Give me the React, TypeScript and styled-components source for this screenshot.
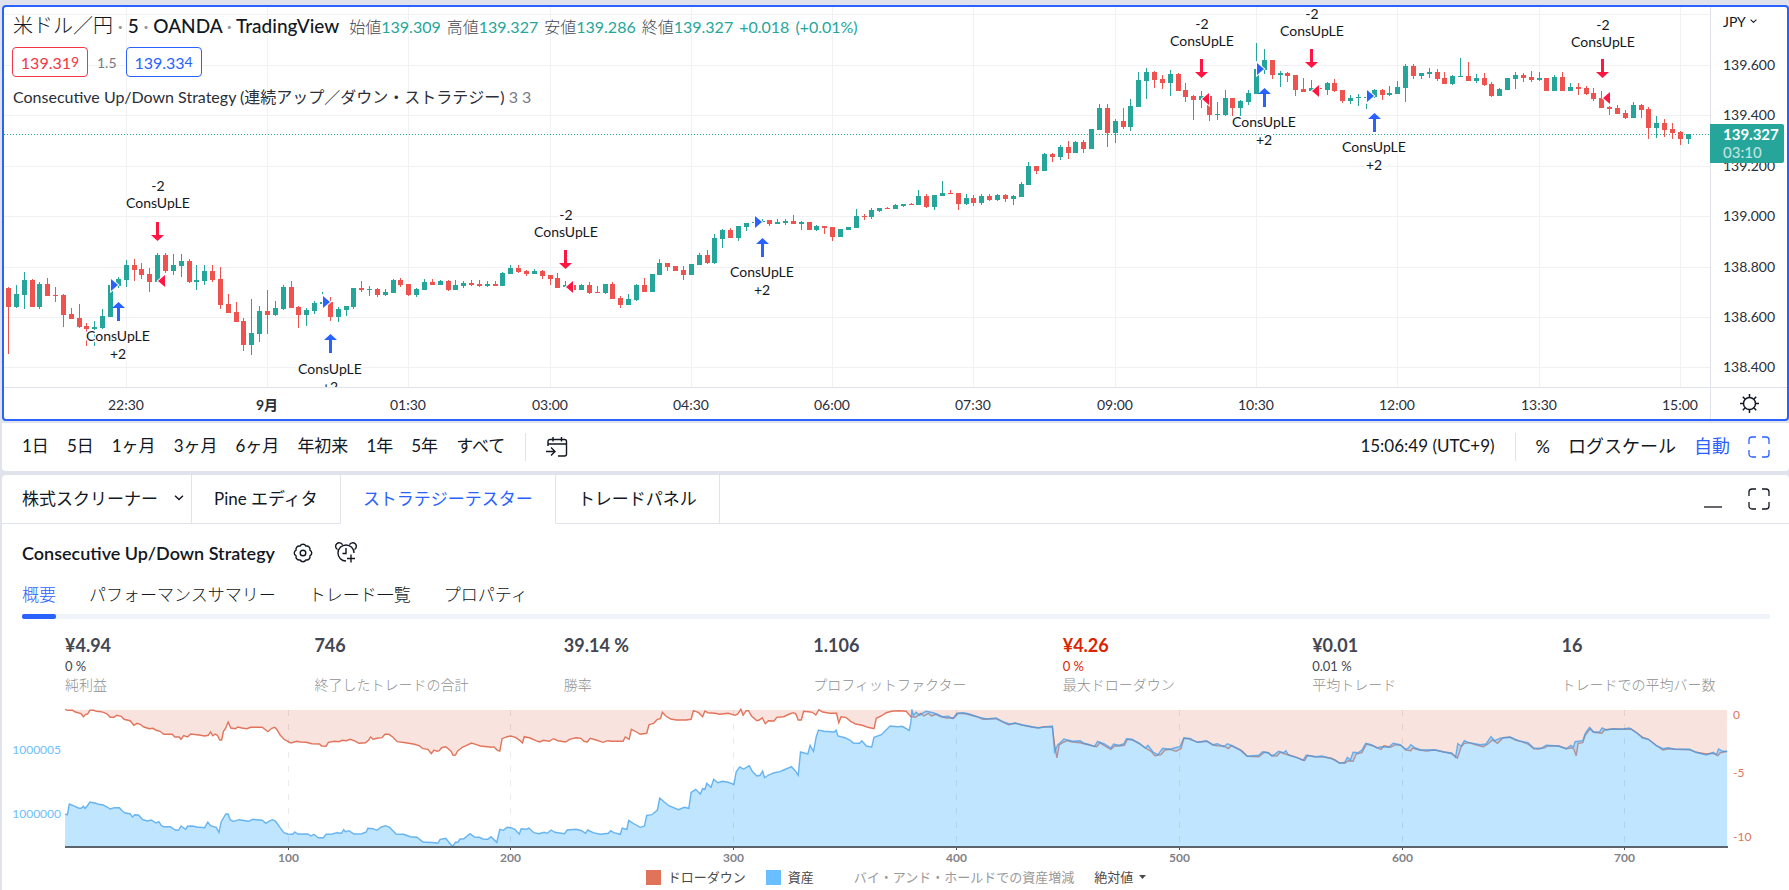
import React from "react";
import styled, { createGlobalStyle } from "styled-components";

const GlobalStyle = createGlobalStyle`
  *, *::before, *::after { box-sizing: border-box; }
  body {
    margin: 0;
    background: #e0e3eb;
    color: #131722;
    font-family: Lato, "Noto Sans CJK JP", sans-serif;
  }
  button, select { font: inherit; color: inherit; background: none; border: 0; padding: 0; margin: 0; cursor: pointer; }
`;

const UP = "#26a69a";
const DOWN = "#ef5350";
const BLUE = "#2962ff";
const SELL = "#ff1744";

const Page = styled.div`
  min-height: 100vh;
  padding: 5px 0 0 2px;
  display: flex;
  flex-direction: column;
`;

/* ---------- price chart ---------- */

const ChartFrame = styled.section`
  position: relative;
  border: 2px solid ${BLUE};
  border-radius: 4px;
  background: #fff;
  display: grid;
  grid-template-columns: minmax(0, 1fr) 77px;
  grid-template-rows: 380px 32px;
  overflow: hidden;
`;

const Pane = styled.div`
  overflow: hidden;
`;

const PlotSvg = styled.svg`
  display: block;
  width: 100%;
  height: 100%;
  font-size: 14px;
`;

const PriceAxis = styled.div`
  border-left: 1px solid #e0e3eb;
`;

const TimeAxis = styled.div`
  border-top: 1px solid #e0e3eb;
`;

const AxisCorner = styled.div`
  border-top: 1px solid #e0e3eb;
  border-left: 1px solid #e0e3eb;
  display: flex;
  align-items: center;
  justify-content: center;
`;

const IconButton = styled.button`
  display: flex;
  color: ${(p) => p.color ?? "#131722"};
`;

const Overlay = styled.div`
  position: absolute;
  top: 4px;
  left: 8px;
  display: flex;
  flex-direction: column;
  align-items: flex-start;
`;

const TitleRow = styled.div`
  display: flex;
  align-items: baseline;
  height: 28px;
  padding-left: 1px;
  line-height: 28px;
  white-space: nowrap;
`;

const SymbolTitle = styled.h1`
  margin: 0;
  font-size: 19px;
  font-weight: 500;
  line-height: 28px;
  i { font-style: normal; color: #9598a1; }
`;

const SymbolName = styled.span`
  font-size: 20px;
  font-weight: 300;
`;

const Quotes = styled.div`
  display: flex;
  align-items: baseline;
  gap: 6px;
  margin-left: 10px;
  font-size: 16px;
  color: ${UP};
`;

const QuoteLabel = styled.span`
  font-weight: 300;
  color: #434651;
`;

const QuoteRow = styled.div`
  display: flex;
  align-items: center;
  gap: 9px;
  margin-top: 8px;
  font-size: 14px;
  color: #787b86;
`;

const PriceButton = styled.button<{ $tone: string }>`
  width: 76px;
  height: 30px;
  border: 1px solid ${(p) => p.$tone};
  border-radius: 4px;
  color: ${(p) => p.$tone};
  background: #fff;
  font-size: 16px;
  sup { font-size: 14px; line-height: 0; vertical-align: 2px; }
`;

const StudyRow = styled.div`
  margin-top: 7px;
  height: 26px;
  line-height: 26px;
  font-size: 16px;
  white-space: nowrap;
  padding-left: 1px;
  color: #2a2e39;
  span { color: #787b86; }
`;

const CurrencyBox = styled.label`
  position: absolute;
  top: 3px;
  right: 30px;
  height: 22px;
  display: flex;
  align-items: center;
  gap: 4px;
  font-size: 14px;
`;

const PlainSelect = styled.select`
  appearance: none;
  outline: none;
`;

const PriceTag = styled.div`
  position: absolute;
  top: 117px;
  right: 3px;
  width: 74px;
  height: 39px;
  padding: 1px 0 0 13px;
  border-radius: 0 2px 2px 0;
  background: ${UP};
  color: #fff;
  font-size: 15px;
  font-weight: 700;
  line-height: 18px;
  div { font-weight: 500; color: #bfe4e0; }
`;

/* Bars: direction, high, body top, body bottom, low; in thirds of a pixel below the run's base. */
const RUN_A = `r351,354,411,552 g345,372,411,414 g306,330,375,417 r327,330,411,411 g336,342,411,417 r323,342,378,378 r351,375,378,396
r372,375,435,471 r414,432,447,447 r402,444,471,474 r459,468,477,528 g453,471,476,528 g417,438,474,477 g345,345,441,441 g321,327,348,354
g270,285,330,351 r266,285,300,333 r279,297,315,327 r294,312,336,366 g249,255,336,336 r249,255,303,309 g252,285,303,315 g252,273,288,321
r267,273,336,339 g285,330,336,360 g285,303,333,345 r285,303,330,336 r291,327,405,417 r372,402,429,429 r396,426,456,456 r444,453,525,543
g387,489,525,555 g408,423,492,516 r360,423,435,492 g393,414,435,438 g345,351,417,420 r333,351,414,414 r408,411,435,474 g414,420,435,468
g393,399,423,432 g366,396,402,402 r381,396,441,453 g411,417,441,456 g408,408,420,438 g354,354,411,417 r333,354,360,366 g348,357,360,378
r354,357,375,381 g357,366,375,377 g327,330,369,369 r324,330,345,351 r342,342,375,378 g354,357,375,381 g327,336,360,360 r327,336,345,345
g330,333,345,345 r330,333,360,363 g330,345,360,360 g333,339,348,354 r330,339,345,348 r330,342,348,351 g333,342,347,351 r333,342,348,348
g306,309,348,348 g285,294,312,312 r285,294,306,309 r300,303,312,318 g297,303,312,312 r300,303,318,327 r315,315,327,345 r309,324,354,354
g333,345,352,354 r345,345,360,360 g342,345,360,360 r336,345,369,372 r348,366,369,369 g342,342,369,372 r336,342,387,387 r378,384,405,414
g372,387,405,405 g342,345,390,393 r324,345,366,366 g312,312,366,366 g267,279,315,315 r279,279,291,303 r288,288,303,303 r288,300,315,330
g282,282,315,315 g249,255,285,285 r240,255,279,282 g192,204,279,282 g177,180,207,234 r174,180,204,204 g168,168,204,213 g159,159,171,183
g156,156,160,160 g147,152,157,160 r150,150,162,168 g147,156,162,162 g147,153,160,165 r135,153,162,162 g153,156,162,180 r156,156,180,180
g165,168,180,183 r168,168,174,192 r171,171,201,213 g177,177,201,201 g171,171,180,180 g117,138,174,174 r132,138,141,150 g114,120,141,147
g114,114,123,126 r111,114,117,117 g102,105,117,117`;

const RUN_B = `g612,612,618,621 r609,612,615,615 g570,588,615,615 r582,588,621,624 g585,585,621,630 g543,579,588,588 r570,579,582,582
r579,579,612,630 g582,594,612,615 r585,594,609,618 g582,588,609,615 r582,588,600,603 g582,585,600,603 r582,585,597,606 g585,588,597,615
g546,552,591,591 g486,498,555,555 r498,498,513,522 g459,462,513,513 r459,462,471,486 g435,441,471,480 r423,441,459,477 g423,426,459,459
r420,426,447,459 g387,387,447,447 g312,324,390,390 r312,324,399,441 g357,363,399,429 r324,363,381,387 g297,318,381,393 g216,240,321,321
g204,216,243,297 r213,216,240,264 r225,237,249,267 g210,222,249,288 r219,222,273,273 r249,270,291,306 r285,288,300,360 g273,288,300,324
r288,288,346,363 g306,342,345,360 g270,294,346,348 r294,294,324,348 g300,303,324,348 g270,279,306,315 g129,207,282,282 g147,180,210,222
r180,180,225,237 g213,219,225,261 r216,219,228,246 r225,225,270,288 r234,267,276,276 g240,264,273,276 r249,264,268,270 g246,249,270,285
r237,249,273,276 r270,270,303,309 g285,294,303,312 g282,291,294,318 g288,291,294,327 g267,270,291,294 r267,270,285,300 g258,279,285,288
g243,261,282,282 g192,198,264,306 r192,198,228,237 g219,219,228,237 g204,216,222,234 r207,216,237,243 r216,234,252,252 g225,228,252,255
g174,228,231,231 r186,228,243,243 g222,234,243,249 r219,234,255,258 r246,252,288,291 g264,267,288,288 g234,234,270,270 g216,225,237,267
r219,225,234,246 r213,231,240,246 g216,234,240,243 r234,234,273,273 g225,231,273,273 r216,231,273,273 g249,261,273,273 r249,261,267,285
r258,264,282,285 r264,279,297,303 r273,294,324,324 r318,321,327,345 r315,324,342,342 r330,339,354,357 g306,315,354,354 r312,315,330,354
r321,327,384,417 g348,369,384,414 r357,369,390,411 r369,387,399,417 r393,396,417,435 g402,402,417,432`;

type Bar = { up: boolean; high: number; top: number; bottom: number; low: number };

const parseRun = (run: string, base: number): Bar[] =>
  run.split(/\s+/).map((item) => {
    const [high, top, bottom, low] = item.slice(1).split(",").map((v) => Math.round(base + Number(v) / 3));
    return { up: item[0] === "g", high, top, bottom: Math.max(bottom, top + 1), low };
  });

const BARS = [...parseRun(RUN_A, 170), ...parseRun(RUN_B, 0)];
const FIRST_X = 8.4;
const BAR_STEP = 7.849;
const barX = (i: number) => Math.round(FIRST_X + i * BAR_STEP - 0.4);

const PRICES = [
  ["", 14], ["139.600", 65], ["139.400", 115], ["139.200", 166], ["139.000", 216],
  ["138.800", 267], ["138.600", 317], ["138.400", 367],
] as const;

const TIMES = ["22:30", "9月", "01:30", "03:00", "04:30", "06:00", "07:30", "09:00", "10:30", "12:00", "13:30", "15:00"];
const timeX = (i: number) => barX(15 + i * 18);

const SELLS = [
  { x: 157, arrow: 222, flag: 281, text: 186 },
  { x: 565, arrow: 250, flag: 287, text: 215 },
  { x: 1201, arrow: 59, flag: 99, text: 24 },
  { x: 1311, arrow: 49, flag: 91, text: 14 },
  { x: 1602, arrow: 59, flag: 98, text: 25 },
];

const BUYS = [
  { x: 118, arrow: 302, flag: 285, text: 336 },
  { x: 330, arrow: 334, flag: 302, text: 369 },
  { x: 762, arrow: 238, flag: 222, text: 272 },
  { x: 1264, arrow: 88, flag: 69, text: 122 },
  { x: 1374, arrow: 113, flag: 96, text: 147 },
];

const MarkText = styled.text`
  fill: #131722;
  stroke: #fff;
  stroke-width: 3px;
  paint-order: stroke;
  text-anchor: middle;
`;

const AxisText = styled.text<{ $bold?: boolean }>`
  fill: #2a2e39;
  text-anchor: middle;
  font-weight: ${(p) => (p.$bold ? 700 : 400)};
`;

const Candles = () => (
  <g shapeRendering="crispEdges">
    {BARS.map((b, i) => {
      const x = barX(i);
      const fill = b.up ? UP : DOWN;
      return (
        <g key={i} fill={fill}>
          <rect x={x} y={b.high} width={1} height={b.low - b.high} />
          <rect x={x - 2} y={b.top} width={5} height={b.bottom - b.top} />
        </g>
      );
    })}
  </g>
);

const PricePlot = () => (
  <PlotSvg viewBox="4 7 1706 380" preserveAspectRatio="xMaxYMin slice" role="img" aria-label="USD/JPY 5分足">
    <g fill="#f0f1f3" shapeRendering="crispEdges">
      {PRICES.map(([, y]) => <rect key={y} x={4} y={y} width={1706} height={1} />)}
      {TIMES.map((t, i) => <rect key={t} x={timeX(i)} y={7} width={1} height={380} />)}
    </g>
    <line x1={4} x2={1710} y1={134.5} y2={134.5} stroke={UP} strokeDasharray="1 2" shapeRendering="crispEdges" />
    <Candles />
    {SELLS.map((s) => (
      <g key={s.x}>
        <path d={`M${s.x + 1} ${s.flag}l7 -6v12z`} fill={SELL} stroke="#fff" strokeWidth={2} paintOrder="stroke" />
        <path d={`M${s.x - 1} ${s.arrow}h3v13h5l-6.5 6l-6.5 -6h5z`} fill={SELL} />
        <MarkText x={s.x + 1} y={s.text + 5}>-2</MarkText>
        <MarkText x={s.x + 1} y={s.text + 22}>ConsUpLE</MarkText>
      </g>
    ))}
    {BUYS.map((b) => (
      <g key={b.x}>
        <path d={`M${b.x} ${b.flag}l-7 -6v12z`} fill={BLUE} stroke="#fff" strokeWidth={2} paintOrder="stroke" />
        <path d={`M${b.x - 1} ${b.arrow + 19}h3v-13h5l-6.5 -6l-6.5 6h5z`} fill={BLUE} />
        <MarkText x={b.x} y={b.text + 5}>ConsUpLE</MarkText>
        <MarkText x={b.x} y={b.text + 23}>+2</MarkText>
      </g>
    ))}
  </PlotSvg>
);

/* ---------- icons ---------- */

const Chevron = ({ size = 7 }: { size?: number }) => (
  <svg width={size} height={size / 2 + 1} viewBox="0 0 8 5" fill="none" stroke="currentColor" strokeWidth="1.2">
    <path d="M.7 .7 4 3.8 7.3 .7" />
  </svg>
);

const SunIcon = () => (
  <svg width="21" height="21" viewBox="0 0 21 21" fill="none" stroke="currentColor" strokeWidth="1.5">
    <circle cx="10.5" cy="10.5" r="6" />
    <path d="M10.5 1v3.5M10.5 16.5V20M1 10.5h3.5M16.5 10.5H20M3.8 3.8l2.4 2.4M14.8 14.8l2.4 2.4M3.8 17.2l2.4-2.4M14.8 6.2l2.4-2.4" />
  </svg>
);

const CornersIcon = () => (
  <svg width="22" height="22" viewBox="0 0 22 22" fill="none" stroke="currentColor" strokeWidth="1.3">
    <path d="M1 8V4a3 3 0 0 1 3-3h4M14 1h4a3 3 0 0 1 3 3v4M21 14v4a3 3 0 0 1-3 3h-4M8 21H4a3 3 0 0 1-3-3v-4" />
  </svg>
);

const GoToDateIcon = () => (
  <svg width="22" height="22" viewBox="0 0 22 22" fill="none" stroke="currentColor" strokeWidth="1.4">
    <path d="M2 10V5.500a2 2 0 0 1 2-2h14.500a2 2 0 0 1 2 2V18a2 2 0 0 1-2 2h-6.500M2 8h18.500M7 1v4.500M15.500 1v4.500M0 15.500h8.500M5 11.500l4 4-4 4" />
  </svg>
);

const GearIcon = () => (
  <svg width="20" height="20" viewBox="0 0 20 20" fill="none" stroke="currentColor" strokeWidth="1.4" strokeLinejoin="round">
    <path d="M16.900 12.900A3.200 3.200 0 0 1 12.900 16.900A3.200 3.200 0 0 1 7.100 16.900A3.200 3.200 0 0 1 3.100 12.900A3.200 3.200 0 0 1 3.100 7.100A3.200 3.200 0 0 1 7.100 3.100A3.200 3.200 0 0 1 12.900 3.100A3.200 3.200 0 0 1 16.900 7.100A3.200 3.200 0 0 1 16.900 12.900z" />
    <circle cx="10" cy="10" r="2.800" />
  </svg>
);

const AlarmAddIcon = () => (
  <svg width="22" height="22" viewBox="0 0 22 22" fill="none" stroke="currentColor" strokeWidth="1.4">
    <path d="M11 19a8 8 0 1 1 8-8M2.500 7.500A3.600 3.600 0 1 1 7.500 2.800M14.500 2.800A3.600 3.600 0 1 1 19.500 7.500M11 6v5.500H7.500M16 12.500v8M12 16.500h8" />
  </svg>
);

/* ---------- range toolbar ---------- */

const RangeBar = styled.nav`
  margin-top: 2px;
  height: 48px;
  padding: 0 19px 0 20px;
  border-radius: 0 0 4px 4px;
  background: #fff;
  display: flex;
  align-items: center;
  font-size: 17px;
  line-height: 24px;
`;

const Ranges = styled.div`
  display: flex;
  gap: 18px;
  padding-bottom: 2px;
`;

const Divider = styled.span`
  width: 1px;
  height: 28px;
  margin: 0 20px;
  background: #e0e3eb;
`;

const Right = styled.div`
  margin-left: auto;
  display: flex;
  align-items: center;
`;

const Clock = styled.button`
  padding-bottom: 2px;
`;

const ScaleOptions = styled.div`
  display: flex;
  align-items: center;
  gap: 18px;
  font-size: 18px;
`;

const ScaleButton = styled.button<{ $active?: boolean }>`
  padding-bottom: 2px;
  color: ${(p) => (p.$active ? BLUE : "#131722")};
`;

/* ---------- tester panel ---------- */

const Panel = styled.section`
  margin-top: 4px;
  flex: 1;
  border-radius: 4px 4px 0 0;
  background: #fff;
`;

const TabStrip = styled.div`
  height: 49px;
  display: flex;
  font-size: 17px;
`;

const PanelTab = styled.button<{ $active?: boolean; $menu?: boolean }>`
  padding: ${(p) => (p.$menu ? "0 7px 3px 20px" : "0 22px 3px")};
  display: flex;
  align-items: center;
  gap: 16px;
  white-space: nowrap;
  color: ${(p) => (p.$active ? BLUE : "#131722")};
  border-right: 1px solid #e0e3eb;
  border-bottom: 1px solid ${(p) => (p.$active ? "#fff" : "#e0e3eb")};
`;

const StripEnd = styled.div`
  flex: 1;
  padding-right: 19px;
  border-bottom: 1px solid #e0e3eb;
  display: flex;
  align-items: center;
  justify-content: flex-end;
  gap: 26px;
`;

const Content = styled.div`
  padding: 15px 19px 0 20px;
`;

const StrategyRow = styled.div`
  height: 28px;
  display: flex;
  align-items: center;
  gap: 18px;
`;

const StrategyActions = styled.div`
  display: flex;
  align-items: center;
  gap: 22px;
`;

const StrategyName = styled.h2`
  margin: 0;
  font-size: 18px;
  font-weight: 600;
  line-height: 28px;
`;

const Views = styled.div`
  margin-top: 12px;
  height: 40px;
  display: flex;
  gap: 33px;
  font-size: 17px;
`;

const ViewTab = styled.button<{ $active?: boolean }>`
  position: relative;
  height: 28px;
  font-weight: 300;
  color: ${(p) => (p.$active ? BLUE : "#131722")};
  &::after {
    content: "";
    display: ${(p) => (p.$active ? "block" : "none")};
    position: absolute;
    left: 0;
    right: 0;
    top: 35px;
    height: 5px;
    border-radius: 2px;
    background: ${BLUE};
  }
`;

const Track = styled.div`
  margin-top: -5px;
  height: 5px;
  border-radius: 2px;
  background: #f0f3fa;
`;

const Stats = styled.dl`
  margin: 15px 0 0;
  padding-left: 43px;
  display: grid;
  grid-template-columns: repeat(7, minmax(0, 1fr));
  margin-right: -41px;
`;

const Stat = styled.div<{ $negative?: boolean }>`
  display: grid;
  grid-template-rows: 22px 20px 18px;
  align-items: center;
  color: ${(p) => (p.$negative ? "#db2500" : "#434651")};
  white-space: nowrap;
  dt { grid-row: 3; font-size: 14px; font-weight: 300; line-height: 18px; color: #8f8f8f; }
  dd { margin: 0; }
`;

const StatValue = styled.dd`
  grid-row: 1;
  font-size: 18px;
  font-weight: 700;
`;

const StatShare = styled.dd`
  grid-row: 2;
  font-size: 13px;
`;

const STATS = [
  { value: "¥4.94", share: "0 %", label: "純利益" },
  { value: "746", share: "", label: "終了したトレードの合計" },
  { value: "39.14 %", share: "", label: "勝率" },
  { value: "1.106", share: "", label: "プロフィットファクター" },
  { value: "¥4.26", share: "0 %", label: "最大ドローダウン", negative: true },
  { value: "¥0.01", share: "0.01 %", label: "平均トレード" },
  { value: "16", share: "", label: "トレードでの平均バー数" },
];

type Trace = { x0: number; y0: number; sx: number; points: string };

const DRAWDOWN: Trace[] = [
  { x0: 0, y0: 680, sx: 2.613, points: "170,88 176,91 190,91 197,96 212,101 218,110 224,103 229,102 235,91 245,91 252,94 264,95 272,98 280,102 288,112 298,112 305,106 317,109 324,118 340,122 350,136 358,130 366,133 376,141 390,146 400,145 408,151 418,154 428,163 450,163 457,171 468,171 473,178 480,167 490,171 498,162 520,165 535,168 544,166 550,156 556,167 562,162 568,166 574,180 579,180 584,154 590,144 596,126 603,144 615,146 622,141 632,144 645,146 655,142 685,142 700,155 710,145 718,142 724,150 732,165 742,178 752,184 760,189 775,184 785,186 800,187 815,191 835,192 840,198 852,199 858,187 875,184 885,185 895,181 905,182 915,178 925,182 938,190 955,188 963,181 968,171 975,178 985,175 998,173 1006,163 1016,163 1026,171 1038,185 1060,188 1080,192 1095,197 1105,206 1118,208 1127,221 1134,210 1142,214 1148,212 1154,203 1165,200 1178,213 1184,226 1190,225 1196,213 1208,202 1218,197 1232,189 1245,194 1255,198 1285,202 1290,200 1300,211 1306,213 1312,176 1325,170 1335,168 1348,173 1358,181 1365,189 1370,170 1385,174 1400,182 1410,186 1420,181 1435,184 1446,176 1458,182 1478,186 1488,178 1505,173 1518,175 1526,184 1535,186 1542,175 1558,180" },
  { x0: 600, y0: 600, sx: 2.613, points: "0,424 8,427 20,422 30,424 50,424 60,424 66,411 76,418 82,388 95,396 105,403 122,400 128,374 140,370 150,358 158,356 163,337 172,348 185,357 200,360 225,360 238,358 244,332 258,338 268,350 274,333 282,338 300,340 312,343 335,340 353,346 360,342 368,328 374,346 382,332 388,332 396,348 410,362 416,360 424,353 432,371 440,362 455,363 462,352 480,350 495,342 505,338 512,342 518,360 526,360 532,334 545,335 555,337 564,345 572,329 582,336 600,340 618,340 624,368 630,350 642,352 655,364 668,372 685,376 700,382 716,386 722,355 735,348 748,338 762,334 780,332 800,334 812,350 825,352 838,340 846,348 858,340 866,348 878,343 890,350 905,354 925,354 936,340 955,341 975,347 985,350 1000,358 1035,356 1055,368 1068,374 1085,370 1105,376 1130,382 1145,384 1162,380 1182,382 1187,430 1194,474 1200,435 1212,426 1222,422 1235,426 1255,428 1280,436 1298,440 1306,428 1318,437 1335,448 1345,437 1355,438 1370,436 1378,418 1390,420 1410,432 1425,444 1440,454 1450,467 1466,464 1476,450 1490,448 1505,454 1518,446 1526,415 1545,418" },
  { x0: 1190, y0: 600, sx: 2.618, points: "0,418 20,427 45,424 60,435 72,437 88,438 100,446 108,437 120,444 135,452 150,469 180,470 195,457 205,458 215,468 228,467 236,457 258,465 280,473 300,482 308,466 325,470 350,471 370,475 380,480 390,488 405,490 415,482 427,484 435,462 450,458 462,432 480,438 500,448 508,437 525,442 538,434 552,436 565,450 578,452 583,444 600,450 620,453 640,450 665,456 685,461 700,474 710,440 718,430 730,428 748,434 768,440 780,432 792,420 805,430 820,413 838,412 852,420 865,424 885,432 900,446 912,447 930,443 936,438 965,438 985,446 1000,443 1005,448 1011,467 1016,430 1028,428 1035,405 1048,386 1056,397 1078,400 1086,389 1108,387 1140,388 1155,387 1170,399 1185,412 1200,418 1220,436 1238,450 1252,446 1270,448 1308,449 1325,457 1350,462 1370,460 1382,467 1388,458 1400,455 1406,455" },
];

const EQUITY: Trace[] = [
  { x0: 0, y0: 680, sx: 2.613, points: "170,403 176,404 181,372 192,377 205,384 212,385 218,379 222,385 228,377 235,366 248,369 258,373 268,374 280,381 288,387 298,383 312,383 320,394 328,399 340,401 346,411 352,404 362,405 372,418 385,423 395,420 408,429 415,425 422,437 428,440 445,440 458,450 467,450 473,438 485,448 490,439 502,438 515,441 535,443 543,426 550,437 565,442 572,457 578,425 590,402 596,402 602,420 610,424 625,419 650,424 660,418 685,421 695,430 702,424 712,419 720,423 732,443 742,458 752,462 765,463 770,456 778,462 805,462 812,468 820,463 832,473 845,473 852,463 868,462 880,458 892,460 898,449 903,455 912,452 925,462 945,461 957,456 961,445 975,446 985,451 996,441 1008,437 1018,442 1035,462 1055,463 1072,470 1090,472 1105,486 1138,488 1144,490 1150,478 1165,475 1175,490 1183,499 1190,487 1196,487 1202,477 1212,476 1228,461 1240,471 1252,472 1262,477 1275,478 1283,470 1298,487 1306,448 1315,451 1325,442 1335,443 1345,448 1357,462 1362,446 1375,448 1382,444 1395,458 1408,461 1422,457 1430,460 1440,450 1450,457 1475,461 1482,450 1505,448 1520,452 1530,460 1536,450 1550,458" },
  { x0: 600, y0: 600, sx: 2.613, points: "0,703 22,700 28,692 36,698 53,703 58,684 70,688 75,661 90,672 105,682 116,678 122,646 135,644 150,630 156,594 168,606 180,617 205,629 220,622 232,625 238,577 250,568 262,582 268,566 274,568 279,550 290,562 297,538 308,548 320,544 335,547 350,553 356,515 365,501 375,507 390,497 398,514 410,528 418,526 425,513 430,533 440,525 455,518 470,515 480,510 500,500 510,512 518,526 524,456 543,462 549,436 558,454 565,410 571,390 585,394 612,396 617,390 622,408 640,413 655,422 662,429 678,430 684,422 696,438 710,441 716,412 735,404 758,378 778,380 790,379 808,391 812,368 815,328 819,346 826,337 835,346 845,338 852,334 865,337 880,342 895,350 910,349 922,356 932,340 950,338 965,342 985,350 1010,357 1035,354 1055,366 1070,372 1085,369 1105,375 1130,380 1145,383 1182,378 1188,455 1196,435 1205,425 1212,417 1235,424 1255,422 1265,430 1280,434 1292,440 1300,424 1318,432 1335,444 1342,432 1355,436 1368,432 1376,416 1390,418 1410,430 1425,444 1432,436 1445,456 1458,464 1470,445 1490,448 1500,444 1515,440 1526,413 1545,416" },
  { x0: 1190, y0: 600, sx: 2.618, points: "0,416 20,427 42,422 60,434 72,431 88,440 98,431 112,438 130,449 150,469 180,466 190,455 205,458 213,467 222,463 232,454 245,458 251,452 258,465 280,473 296,481 304,466 330,470 345,468 370,476 380,481 392,490 405,487 412,472 420,480 427,457 440,458 450,450 460,430 475,434 490,444 500,440 520,442 532,430 550,434 565,448 572,444 578,434 590,444 605,450 640,449 665,456 685,459 695,472 701,431 710,438 718,422 730,428 760,434 775,432 788,410 798,422 812,415 838,411 860,422 885,428 900,444 920,445 932,436 965,438 985,446 997,436 1004,441 1008,425 1028,422 1035,400 1046,382 1056,395 1072,396 1079,384 1090,390 1108,386 1130,388 1150,384 1170,399 1185,414 1200,418 1220,436 1238,446 1252,443 1270,448 1308,448 1325,457 1352,465 1370,457 1378,464 1384,447 1395,454 1406,454" },
];

const toLine = (traces: Trace[]) =>
  traces
    .flatMap((t) =>
      t.points.split(" ").map((pair) => {
        const [x, y] = pair.split(",").map(Number);
        return `${(t.x0 + x / t.sx).toFixed(1)} ${(t.y0 + y / 3).toFixed(1)}`;
      })
    )
    .join("L");

const CurveSvg = styled.svg`
  display: block;
  width: 100%;
  height: 164px;
  font-size: 12px;
`;

const CurveBox = styled.div`
  margin: 9px -19px 0 -20px;
`;

const EquityCurve = () => {
  const drawdown = toLine(DRAWDOWN);
  const equity = toLine(EQUITY);
  return (
    <CurveSvg viewBox="2 703 1787 164" role="img" aria-label="資産とドローダウン">
      <path d={`M65 710L${drawdown}V710z`} fill="#e0745b" fillOpacity={0.2} />
      <path d={`M${drawdown}`} fill="none" stroke="#e2745b" strokeWidth={1.4} />
      <path d={`M65 847L${equity}V847z`} fill="#5fbfff" fillOpacity={0.4} />
      <path d={`M${equity}`} fill="none" stroke="#3f9fec" strokeOpacity={0.75} strokeWidth={1.4} />
      {[1, 2, 3, 4, 5, 6, 7].map((n) => {
        const x = Math.round(64.7 + n * 222.8) + 0.5;
        return (
          <g key={n}>
            <path d={`M${x} 710V846`} stroke="#000" strokeOpacity={0.08} strokeDasharray="6 8" />
            <path d={`M${x} 847v3`} stroke="#4a4d52" />
            <text x={x} y={862} fill="#7f8288" fontWeight={700} textAnchor="middle">{n * 100}</text>
          </g>
        );
      })}
      <rect x={65} y={846} width={1663} height={2} fill="#5c656c" shapeRendering="crispEdges" />
      <g fill="#6bc0ff" textAnchor="end">
        <text x={61} y={754}>1000005</text>
        <text x={61} y={818}>1000000</text>
      </g>
      <g fill="#e2745b">
        <text x={1733} y={719}>0</text>
        <text x={1733} y={777}>-5</text>
        <text x={1733} y={841}>-10</text>
      </g>
    </CurveSvg>
  );
};

const Legend = styled.div`
  height: 20px;
  display: flex;
  justify-content: center;
  align-items: center;
  font-size: 13px;
  line-height: 20px;
  color: #4a4a4a;
  white-space: nowrap;
`;

const LegendItem = styled.button<{ $swatch?: string; $muted?: boolean; $last?: boolean }>`
  display: flex;
  align-items: center;
  gap: 7px;
  margin-right: ${(p) => (p.$last ? 40 : 20)}px;
  color: ${(p) => (p.$muted ? "#9a9a9a" : "#4a4a4a")};
  &::before {
    content: "";
    display: ${(p) => (p.$swatch ? "block" : "none")};
    width: 15px;
    height: 15px;
    background: ${(p) => p.$swatch};
  }
`;

const ModeBox = styled.label`
  display: flex;
  align-items: center;
  gap: 5px;
`;

const RANGES = ["1日", "5日", "1ヶ月", "3ヶ月", "6ヶ月", "年初来", "1年", "5年", "すべて"];

export default function App() {
  return (
    <Page>
      <GlobalStyle />
      <ChartFrame>
        <Pane><PricePlot /></Pane>
        <PriceAxis>
          <PlotSvg viewBox="1711 7 76 380" preserveAspectRatio="xMinYMin meet">
            {PRICES.filter(([t]) => t).map(([t, y]) => (
              <AxisText key={t} x={1749} y={y + 5}>{t}</AxisText>
            ))}
          </PlotSvg>
        </PriceAxis>
        <TimeAxis>
          <PlotSvg viewBox="4 388 1706 31" preserveAspectRatio="xMaxYMin slice">
            {TIMES.map((t, i) => (
              <AxisText key={t} x={timeX(i)} y={410} $bold={t === "9月"}>{t}</AxisText>
            ))}
          </PlotSvg>
        </TimeAxis>
        <AxisCorner><IconButton aria-label="設定"><SunIcon /></IconButton></AxisCorner>

        <Overlay>
          <TitleRow>
            <SymbolTitle>
              <SymbolName>米ドル／円</SymbolName> <i>·</i> 5 <i>·</i> OANDA <i>·</i> TradingView
            </SymbolTitle>
            <Quotes>
              <span><QuoteLabel>始値</QuoteLabel>139.309</span>
              <span><QuoteLabel>高値</QuoteLabel>139.327</span>
              <span><QuoteLabel>安値</QuoteLabel>139.286</span>
              <span><QuoteLabel>終値</QuoteLabel>139.327</span>
              <span>+0.018</span>
              <span>(+0.01%)</span>
            </Quotes>
          </TitleRow>
          <QuoteRow>
            <PriceButton $tone="#f23645">139.31<sup>9</sup></PriceButton>
            <span>1.5</span>
            <PriceButton $tone={BLUE}>139.33<sup>4</sup></PriceButton>
          </QuoteRow>
          <StudyRow>Consecutive Up/Down Strategy (連続アップ／ダウン・ストラテジー) <span>3 3</span></StudyRow>
        </Overlay>

        <CurrencyBox>
          <PlainSelect aria-label="通貨" defaultValue="JPY"><option>JPY</option></PlainSelect>
          <Chevron />
        </CurrencyBox>
        <PriceTag>139.327<div>03:10</div></PriceTag>
      </ChartFrame>

      <RangeBar>
        <Ranges>
          {RANGES.map((r) => <button key={r}>{r}</button>)}
        </Ranges>
        <Divider />
        <IconButton aria-label="日付へ移動"><GoToDateIcon /></IconButton>
        <Right>
          <Clock>15:06:49 (UTC+9)</Clock>
          <Divider />
          <ScaleOptions>
            <ScaleButton>%</ScaleButton>
            <ScaleButton>ログスケール</ScaleButton>
            <ScaleButton $active>自動</ScaleButton>
            <IconButton color={BLUE} aria-label="全画面"><CornersIcon /></IconButton>
          </ScaleOptions>
        </Right>
      </RangeBar>

      <Panel>
        <TabStrip>
          <PanelTab $menu>株式スクリーナー <Chevron size={10} /></PanelTab>
          <PanelTab>Pine エディタ</PanelTab>
          <PanelTab $active>ストラテジーテスター</PanelTab>
          <PanelTab>トレードパネル</PanelTab>
          <StripEnd>
            <IconButton aria-label="最小化">
              <svg width="18" height="22" viewBox="0 0 18 22" stroke="currentColor" strokeWidth="1.3"><path d="M0 19h18" /></svg>
            </IconButton>
            <IconButton aria-label="最大化"><CornersIcon /></IconButton>
          </StripEnd>
        </TabStrip>
        <Content>
          <StrategyRow>
            <StrategyName>Consecutive Up/Down Strategy</StrategyName>
            <StrategyActions>
              <IconButton aria-label="ストラテジー設定"><GearIcon /></IconButton>
              <IconButton aria-label="アラート追加"><AlarmAddIcon /></IconButton>
            </StrategyActions>
          </StrategyRow>
          <Views>
            <ViewTab $active>概要</ViewTab>
            <ViewTab>パフォーマンスサマリー</ViewTab>
            <ViewTab>トレード一覧</ViewTab>
            <ViewTab>プロパティ</ViewTab>
          </Views>
          <Track />
          <Stats>
            {STATS.map((s) => (
              <Stat key={s.label} $negative={s.negative}>
                <dt>{s.label}</dt>
                <StatValue>{s.value}</StatValue>
                {s.share && <StatShare>{s.share}</StatShare>}
              </Stat>
            ))}
          </Stats>
          <CurveBox><EquityCurve /></CurveBox>
          <Legend>
            <LegendItem $swatch="#e0745b">ドローダウン</LegendItem>
            <LegendItem $swatch="#69bfff" $last>資産</LegendItem>
            <LegendItem $muted>バイ・アンド・ホールドでの資産増減</LegendItem>
            <ModeBox>
              <PlainSelect aria-label="表示単位" defaultValue="絶対値"><option>絶対値</option></PlainSelect>
              <svg width="7" height="4" viewBox="0 0 7 4"><path d="M0 0h7L3.500 4z" fill="#4a4a4a" /></svg>
            </ModeBox>
          </Legend>
        </Content>
      </Panel>
    </Page>
  );
}
